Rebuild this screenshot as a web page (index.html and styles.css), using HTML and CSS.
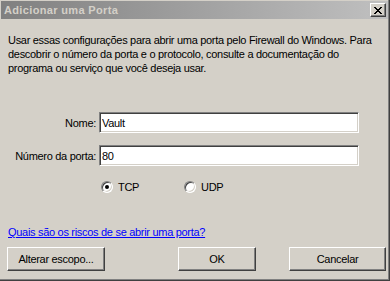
FILE: index.html
```html
<!DOCTYPE html>
<html lang="pt-BR">
<head>
<meta charset="utf-8">
<title>Adicionar uma Porta</title>
<link rel="stylesheet" href="styles.css">
</head>
<body>
<div class="window">
  <div class="titlebar">
    <span class="title">Adicionar uma Porta</span>
    <button class="close" aria-label="Fechar">
      <svg width="8" height="7" viewBox="0 0 8 7" shape-rendering="crispEdges">
        <path d="M0 0h2v1h-2zM6 0h2v1h-2zM1 1h2v1h-2zM5 1h2v1h-2zM2 2h4v1h-4zM3 3h2v1h-2zM2 4h4v1h-4zM1 5h2v1h-2zM5 5h2v1h-2zM0 6h2v1h-2zM6 6h2v1h-2z" fill="#000"/>
      </svg>
    </button>
  </div>
  <div class="content">
    <p class="intro">Usar essas configurações para abrir uma porta pelo Firewall do Windows. Para<br>descobrir o número da porta e o protocolo, consulte a documentação do<br>programa ou serviço que você deseja usar.</p>
    <div class="form">
      <label class="label" for="nome">Nome:</label>
      <input class="field" id="nome" type="text" value="Vault">
      <label class="label" for="porta">Número da porta:</label>
      <input class="field" id="porta" type="text" value="80">
    </div>
    <div class="radios">
      <span class="radio-item"><span class="radio checked"><span class="dot"></span></span><span class="radio-label">TCP</span></span>
      <span class="radio-item"><span class="radio"></span><span class="radio-label">UDP</span></span>
    </div>
    <a class="link" href="#">Quais são os riscos de se abrir uma porta?</a>
    <div class="buttons">
      <button class="btn btn-scope">Alterar escopo...</button>
      <button class="btn btn-ok">OK</button>
      <button class="btn btn-cancel">Cancelar</button>
    </div>
  </div>
</div>
</body>
</html>
```

FILE: styles.css
```css
html, body {
  margin: 0;
  padding: 0;
}
body {
  background: #d4d0c8;
  font-family: "Liberation Sans", Arial, sans-serif;
  font-size: 11px;
  letter-spacing: -0.3px;
  color: #000;
}
.window {
  width: 390px;
  height: 281px;
  box-sizing: border-box;
  background: #d4d0c8;
  padding: 1px 0 0 1px;
  border-right: 1px solid #404040;
  border-bottom: 1px solid #404040;
  box-shadow: inset -1px -1px 0 #808080;
  display: flex;
  flex-direction: column;
}
.titlebar {
  height: 18px;
  margin-right: 1px;
  background: linear-gradient(to right, #808080, #c0c0c0);
  display: flex;
  align-items: center;
  justify-content: space-between;
  padding: 0 2px 0 3px;
}
.title {
  color: #d4d0c8;
  font-weight: bold;
  font-size: 11px;
  letter-spacing: 0.35px;
}
.close {
  width: 16px;
  height: 14px;
  padding: 0;
  box-sizing: border-box;
  background: #d4d0c8;
  border: 1px solid;
  border-color: #fff #404040 #404040 #fff;
  box-shadow: inset -1px -1px 0 #808080;
  display: flex;
  align-items: center;
  justify-content: center;
}
.close svg {
  display: block;
}
.content {
  padding: 0 0 0 7px;
  flex: 1;
  display: flex;
  flex-direction: column;
}
.intro {
  margin: 14px 0 0 0;
  line-height: 14px;
  white-space: nowrap;
}
.form {
  display: grid;
  grid-template-columns: 88px 260px;
  column-gap: 3px;
  row-gap: 12px;
  align-items: center;
  margin-top: 37px;
}
.label {
  text-align: right;
}
.field {
  height: 21px;
  box-sizing: border-box;
  margin: 0;
  padding: 0 2px;
  font: inherit;
  letter-spacing: inherit;
  background: #fff;
  border: 1px solid;
  border-color: #808080 #fff #fff #808080;
  box-shadow: inset 1px 1px 0 #404040, inset -1px -1px 0 #d4d0c8;
  outline: none;
}
.radios {
  display: flex;
  margin: 15px 0 0 93px;
  height: 12px;
  align-items: center;
}
.radio-item {
  display: flex;
  align-items: center;
  width: 83px;
}
.radio {
  width: 12px;
  height: 12px;
  box-sizing: border-box;
  border-radius: 50%;
  border: 1px solid;
  border-color: #808080 #fff #fff #808080;
  background: #fff;
  box-shadow: inset 1px 1px 0 #404040, inset -1px -1px 0 #d4d0c8;
  display: flex;
  align-items: center;
  justify-content: center;
}
.dot {
  width: 4px;
  height: 4px;
  border-radius: 50%;
  background: #000;
}
.radio-label {
  margin-left: 5px;
}
.link {
  color: #0000ff;
  margin-top: 33px;
  align-self: flex-start;
}
.buttons {
  display: flex;
  margin: 9px 0 0 -1px;
}
.btn {
  height: 24px;
  box-sizing: border-box;
  padding: 0;
  font: inherit;
  letter-spacing: inherit;
  color: #000;
  background: #d4d0c8;
  border: 1px solid;
  border-color: #fff #404040 #404040 #fff;
  box-shadow: inset -1px -1px 0 #808080;
}
.btn-scope {
  width: 98px;
}
.btn-ok {
  width: 78px;
  margin-left: 73px;
}
.btn-cancel {
  width: 97px;
  margin-left: 33px;
}
```
